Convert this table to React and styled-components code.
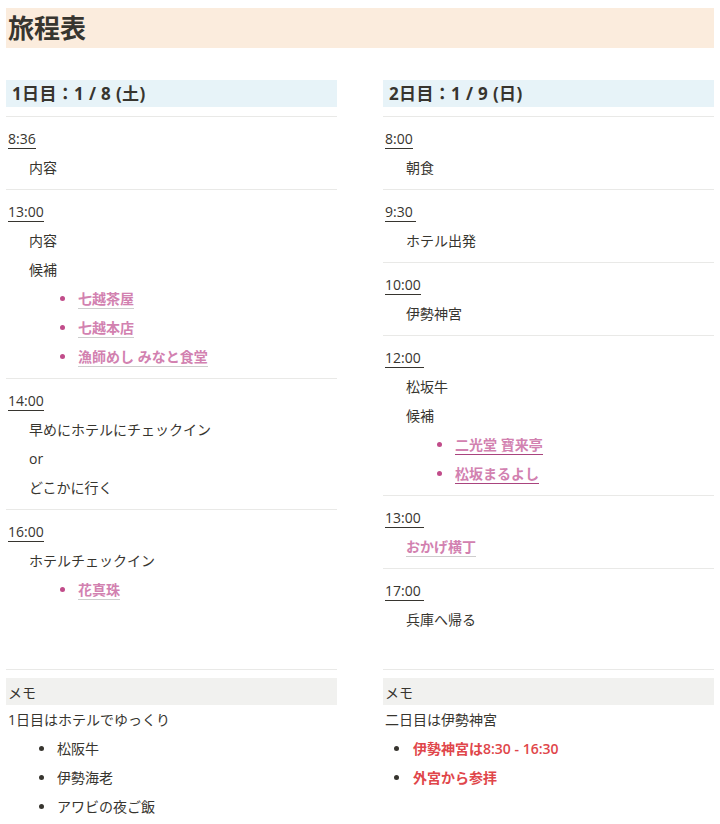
import styled, { createGlobalStyle } from 'styled-components';

const GlobalStyle = createGlobalStyle`
  body {
    margin: 0;
    background: #ffffff;
    color: #37352f;
    font-family: "Open Sans", "Noto Sans CJK JP", sans-serif;
    font-size: 14px;
  }
`;

const days = [
  {
    title: '1日目：1 / 8 (土)',
    blocks: [
      { time: '8:36', items: [{ text: '内容' }] },
      {
        time: '13:00',
        items: [
          { text: '内容' },
          { text: '候補' },
          { link: '七越茶屋' },
          { link: '七越本店' },
          { link: '漁師めし みなと食堂' },
        ],
      },
      {
        time: '14:00',
        items: [
          { text: '早めにホテルにチェックイン' },
          { text: 'or' },
          { text: 'どこかに行く' },
        ],
      },
      {
        time: '16:00',
        items: [{ text: 'ホテルチェックイン' }, { link: '花真珠' }],
      },
    ],
    memo: {
      lead: '1日目はホテルでゆっくり',
      tone: 'plain',
      points: ['松阪牛', '伊勢海老', 'アワビの夜ご飯'],
    },
  },
  {
    title: '2日目：1 / 9 (日)',
    blocks: [
      { time: '8:00', items: [{ text: '朝食' }] },
      { time: '9:30\u00a0', items: [{ text: 'ホテル出発' }] },
      { time: '10:00', items: [{ text: '伊勢神宮' }] },
      {
        time: '12:00\u00a0',
        items: [
          { text: '松坂牛' },
          { text: '候補' },
          { link: '二光堂 寶来亭', active: true },
          { link: '松坂まるよし', active: true },
        ],
      },
      { time: '13:00\u00a0', items: [{ link: 'おかげ横丁', plain: true }] },
      { time: '17:00\u00a0', items: [{ text: '兵庫へ帰る' }] },
    ],
    memo: {
      lead: '二日目は伊勢神宮',
      tone: 'alert',
      points: ['伊勢神宮は8:30 - 16:30', '外宮から参拝'],
    },
  },
];

function Item({ item }) {
  if (item.text) return <Row $indent={23}>{item.text}</Row>;
  if (item.plain) {
    return (
      <Row $indent={23}>
        <PinkLink>{item.link}</PinkLink>
      </Row>
    );
  }
  return (
    <Row $indent={54}>
      <Dot $color="#c14c8a" $gap={13} />
      <PinkLink $active={item.active}>{item.link}</PinkLink>
    </Row>
  );
}

function Memo({ memo }) {
  const alert = memo.tone === 'alert';
  return (
    <MemoSection>
      <MemoBand>メモ</MemoBand>
      <Row $indent={2}>{memo.lead}</Row>
      {memo.points.map((p) => (
        <Row key={p} $indent={alert ? 11 : 33}>
          <Dot $color="#37352f" $gap={alert ? 14 : 13} />
          {alert ? <AlertText>{p}</AlertText> : p}
        </Row>
      ))}
    </MemoSection>
  );
}

export default function App() {
  return (
    <Page>
      <GlobalStyle />
      <TitleBand>旅程表</TitleBand>
      <Columns>
        {days.map((day) => (
          <Schedule key={day.title}>
            <DayHeading>{day.title}</DayHeading>
            {day.blocks.map((b) => (
              <Block key={b.time}>
                <Row $indent={2}>
                  <Time>{b.time}</Time>
                </Row>
                {b.items.map((it, i) => (
                  <Item key={i} item={it} />
                ))}
              </Block>
            ))}
          </Schedule>
        ))}
        {days.map((day) => (
          <Memo key={day.title + '-memo'} memo={day.memo} />
        ))}
      </Columns>
    </Page>
  );
}

const Page = styled.main`
  padding: 8px 6px 0;
`;

const TitleBand = styled.h1`
  margin: 0;
  height: 40px;
  display: flex;
  align-items: center;
  padding-left: 2px;
  background: #fbecdd;
  font-size: 26px;
  font-weight: 700;
  line-height: 1;
  color: #37352f;
`;

const Columns = styled.div`
  display: grid;
  grid-template-columns: 331px 331px;
  column-gap: 46px;
  margin-top: 32px;
`;

const Schedule = styled.section`
  display: flex;
  flex-direction: column;
`;

const DayHeading = styled.h2`
  margin: 0 0 9px;
  height: 27px;
  display: flex;
  align-items: center;
  padding-left: 6px;
  background: #e7f3f8;
  font-size: 17px;
  font-weight: 700;
  line-height: 1;
  letter-spacing: 0.35px;
`;

const Block = styled.div`
  border-top: 1px solid #e9e9e7;
  padding: 7px 0 7px;
`;

const Row = styled.div`
  height: 29px;
  display: flex;
  align-items: center;
  padding-left: ${({ $indent }) => $indent}px;
  line-height: 20px;
  white-space: pre;
`;

const Time = styled.span`
  display: inline-block;
  line-height: 19px;
  border-bottom: 1px solid #37352f;
`;

const Dot = styled.span`
  flex: none;
  width: 5px;
  height: 5px;
  border-radius: 50%;
  background: ${({ $color }) => $color};
  margin-right: ${({ $gap }) => $gap}px;
`;

const PinkLink = styled.span`
  color: #d281b0;
  font-weight: 600;
  line-height: 19px;
  border-bottom: 1px solid ${({ $active }) => ($active ? '#a9447e' : '#cdcdcd')};
`;

const AlertText = styled.span`
  color: #e0464a;
  font-weight: 600;
`;

const MemoSection = styled.section`
  margin-top: 28px;
  border-top: 1px solid #e9e9e7;
  padding-top: 8px;
`;

const MemoBand = styled.div`
  height: 27px;
  display: flex;
  align-items: center;
  padding-left: 2px;
  background: #f1f1ef;
`;
